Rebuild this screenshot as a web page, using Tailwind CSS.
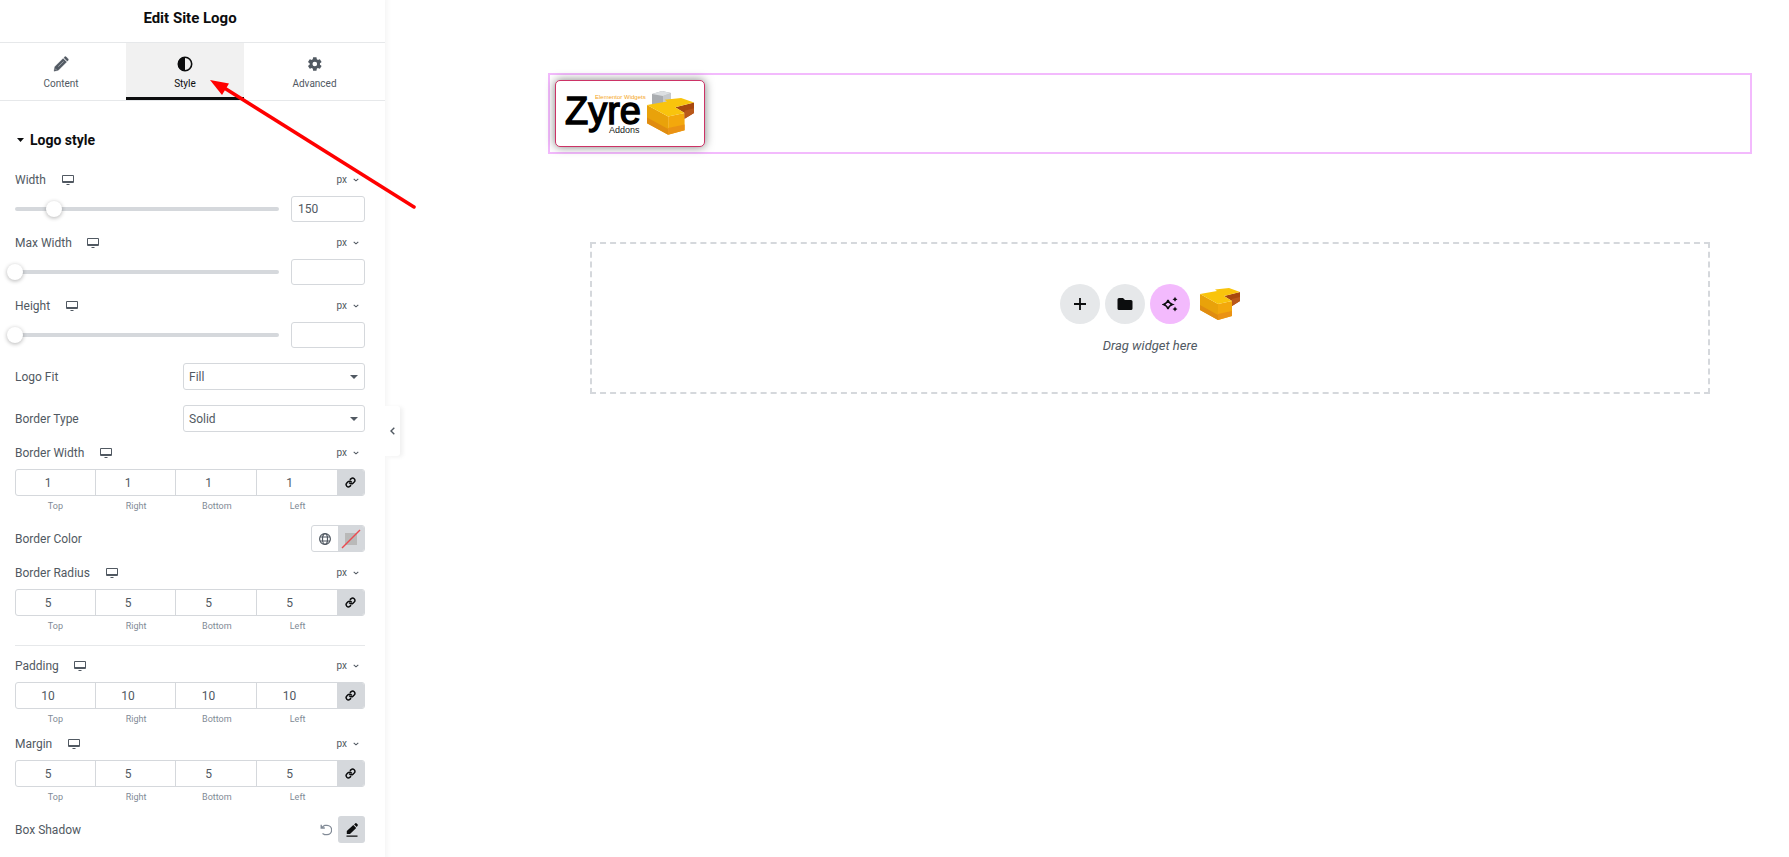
<!DOCTYPE html>
<html lang="en">
<head>
  <meta charset="UTF-8">
  <meta name="viewport" content="width=device-width, initial-scale=1.0">
  <title>Edit Site Logo</title>
  <script src="https://cdn.jsdelivr.net/npm/@tailwindcss/browser@4"></script>
</head>
<body class="relative flex min-h-screen overflow-hidden bg-white font-[Roboto,sans-serif] text-xs text-[#515962]">
  <!-- Icons shared by the controls -->
  <svg class="hidden" aria-hidden="true">
    <symbol id="i-desktop" viewBox="0 0 12 10"><path d="M1 0h10a1 1 0 0 1 1 1v6a1 1 0 0 1-1 1H1a1 1 0 0 1-1-1V1a1 1 0 0 1 1-1zm0 1v5h10V1zM4 9h4l-1 1H5z" fill="currentColor" fill-rule="evenodd"/></symbol>
    <symbol id="i-down" viewBox="0 0 6 4"><path d="M.7.8 3 2.800 5.300.8" fill="none" stroke="currentColor" stroke-width="1.100"/></symbol>
    <symbol id="i-link" viewBox="0 0 24 24"><path d="M10 13a5 5 0 0 0 7.500.5l3-3a5 5 0 0 0-7-7l-1.800 1.700M14 11a5 5 0 0 0-7.500-.5l-3 3a5 5 0 0 0 7 7l1.700-1.700" fill="none" stroke="currentColor" stroke-width="3.200" stroke-linecap="round"/></symbol>
    <symbol id="i-brick" viewBox="0 0 40 33">
      <path d="M0 6 18 16v16L0 22z" fill="#e9a20a"/>
      <path d="M0 17 18 27v5L0 22z" fill="#e08c10"/>
      <path d="M18 16 32 13v15l-14 4z" fill="#f3a80c"/>
      <path d="M18 26 32 23v5l-14 4z" fill="#ea9214"/>
      <path d="M24 8 40 4v9l-8 5v-5z" fill="#a8480f"/>
      <path d="M32 11 40 9v4l-8 5z" fill="#b9581a"/>
      <path d="M0 6 17 3l-2-1.500L29 0l11 4-16 4 8 5-14 3z" fill="#f9c40c"/>
    </symbol>
  </svg>

  <!-- Editor panel -->
  <aside class="relative z-10 w-[385px] shrink-0 shadow-[0_0_4px_3px_#f7f7f7]">
    <h1 class="h-[42px] pt-[6px] pr-[5px] text-center text-[15px] leading-6 font-bold text-[#0c0d0e]">Edit Site Logo</h1>
    <nav class="flex h-[59px] border-y border-[#e6e8ea] text-[10px] leading-3">
      <button class="flex w-[126px] flex-col items-center gap-[6px] pt-[13px] pr-1">
        <svg class="size-4" viewBox="0 0 16 16" fill="currentColor"><path d="m10.900 1.700.9-.9q.7-.5 1.300 0l2.100 2.100q.5.700 0 1.300l-.9 1zM10.100 2.500l3.500 3.500-8.300 8.300L1 15.200l.8-4.400zM10.400 5.200l-5.300 5.200.4.4 5.300-5.200zM2.700 12.400l-.3 1.400 1.400-.3z" fill-rule="evenodd" stroke="currentColor" stroke-width=".3"/></svg>
        Content
      </button>
      <button class="flex w-[118px] flex-col items-center gap-[6px] border-b-3 border-[#0c0d0e] bg-[#f1f1f1] pt-[13px] text-[#0c0d0e]">
        <svg class="size-4" viewBox="0 0 16 16"><circle cx="8" cy="8" r="6.700" fill="none" stroke="currentColor" stroke-width="1.600"/><path d="M8 1a7 7 0 0 0 0 14z" fill="currentColor"/></svg>
        Style
      </button>
      <button class="flex flex-1 flex-col items-center gap-[6px] pt-[13px]">
        <svg class="size-4" viewBox="0 0 24 24" fill="currentColor"><path d="M19.400 13c0-.3.100-.6.100-1s0-.7-.1-1l2.200-1.600c.2-.2.200-.4.100-.6l-2.200-3.700c-.1-.2-.4-.3-.6-.2l-2.500 1c-.5-.4-1.100-.7-1.700-1L14.300 2.200c0-.2-.3-.4-.5-.4H9.600c-.2 0-.4.200-.5.400l-.4 2.700c-.6.3-1.200.6-1.700 1l-2.500-1c-.2-.1-.5 0-.6.200L1.700 8.800c-.1.200-.1.500.1.600L4 11c0 .3-.1.700-.1 1s0 .7.100 1l-2.200 1.600c-.2.200-.2.400-.1.600l2.200 3.700c.1.200.4.300.6.200l2.500-1c.5.400 1.100.7 1.700 1l.4 2.700c0 .2.300.4.500.4h4.200c.2 0 .4-.2.500-.4l.4-2.700c.6-.3 1.200-.6 1.700-1l2.500 1c.2.100.5 0 .6-.2l2.200-3.700c.1-.2.1-.4-.1-.6zM11.700 15.500a3.500 3.500 0 1 1 0-7 3.500 3.500 0 0 1 0 7z" fill-rule="evenodd"/></svg>
        Advanced
      </button>
    </nav>

    <section class="pt-[30px] pr-5 pb-3 pl-[15px]">
      <h2 class="mb-6"><button class="flex h-[17px] items-center gap-[6px] pl-[2px] text-sm font-bold text-[#0c0d0e]">
        <svg class="h-1 w-[7px]" viewBox="0 0 7 4"><path d="M0 0h7L3.500 4z" fill="currentColor"/></svg>Logo style</button></h2>

      <!-- Sliders -->
      <div class="flex flex-col gap-[13px]">
        <div>
          <div class="flex h-4 items-center"><label for="width">Width</label><svg class="ml-4 h-[10px] w-3"><use href="#i-desktop"/></svg><button class="ml-auto flex items-center gap-[6px] pr-[6px] text-[10px]">px<svg class="h-1 w-[6px]"><use href="#i-down"/></svg></button></div>
          <div class="mt-2 flex items-center gap-3">
            <div class="relative flex h-4 flex-1 items-center"><div class="h-1 w-full rounded bg-[#d5d8dc]"></div><input type="range" aria-label="Width" min="0" max="1000" value="148" class="absolute -left-2 h-4 w-[calc(100%+16px)] appearance-none bg-transparent [&::-webkit-slider-thumb]:size-4 [&::-webkit-slider-thumb]:appearance-none [&::-webkit-slider-thumb]:rounded-full [&::-webkit-slider-thumb]:bg-white [&::-webkit-slider-thumb]:shadow-[0_1px_4px_rgba(0,0,0,0.3)]"></div>
            <input id="width" value="150" class="h-[26px] w-[74px] rounded-[3px] border border-[#d5d8dc] px-[6px]">
          </div>
        </div>
        <div>
          <div class="flex h-4 items-center"><label for="max-width">Max Width</label><svg class="ml-[15px] h-[10px] w-3"><use href="#i-desktop"/></svg><button class="ml-auto flex items-center gap-[6px] pr-[6px] text-[10px]">px<svg class="h-1 w-[6px]"><use href="#i-down"/></svg></button></div>
          <div class="mt-2 flex items-center gap-3">
            <div class="relative flex h-4 flex-1 items-center"><div class="h-1 w-full rounded bg-[#d5d8dc]"></div><input type="range" aria-label="Max Width" min="0" max="1000" value="0" class="absolute -left-2 h-4 w-[calc(100%+16px)] appearance-none bg-transparent [&::-webkit-slider-thumb]:size-4 [&::-webkit-slider-thumb]:appearance-none [&::-webkit-slider-thumb]:rounded-full [&::-webkit-slider-thumb]:bg-white [&::-webkit-slider-thumb]:shadow-[0_1px_4px_rgba(0,0,0,0.3)]"></div>
            <input id="max-width" class="h-[26px] w-[74px] rounded-[3px] border border-[#d5d8dc] px-[6px]">
          </div>
        </div>
        <div>
          <div class="flex h-4 items-center"><label for="height">Height</label><svg class="ml-4 h-[10px] w-3"><use href="#i-desktop"/></svg><button class="ml-auto flex items-center gap-[6px] pr-[6px] text-[10px]">px<svg class="h-1 w-[6px]"><use href="#i-down"/></svg></button></div>
          <div class="mt-2 flex items-center gap-3">
            <div class="relative flex h-4 flex-1 items-center"><div class="h-1 w-full rounded bg-[#d5d8dc]"></div><input type="range" aria-label="Height" min="0" max="1000" value="0" class="absolute -left-2 h-4 w-[calc(100%+16px)] appearance-none bg-transparent [&::-webkit-slider-thumb]:size-4 [&::-webkit-slider-thumb]:appearance-none [&::-webkit-slider-thumb]:rounded-full [&::-webkit-slider-thumb]:bg-white [&::-webkit-slider-thumb]:shadow-[0_1px_4px_rgba(0,0,0,0.3)]"></div>
            <input id="height" class="h-[26px] w-[74px] rounded-[3px] border border-[#d5d8dc] px-[6px]">
          </div>
        </div>
      </div>

      <!-- Drop-downs -->
      <div class="my-[15px] flex items-center justify-between">
        <label for="fit">Logo Fit</label>
        <div class="relative w-[182px]"><select id="fit" class="block h-[27px] w-full appearance-none rounded-[3px] border border-[#d5d8dc] px-[5px]"><option>Fill</option></select><svg class="pointer-events-none absolute top-3 right-[7px] h-1 w-2" viewBox="0 0 8 4"><path d="M0 0h8L4 4z" fill="currentColor"/></svg></div>
      </div>
      <div class="mb-[13px] flex items-center justify-between">
        <label for="border-type">Border Type</label>
        <div class="relative w-[182px]"><select id="border-type" class="block h-[27px] w-full appearance-none rounded-[3px] border border-[#d5d8dc] px-[5px]"><option>Solid</option></select><svg class="pointer-events-none absolute top-3 right-[7px] h-1 w-2" viewBox="0 0 8 4"><path d="M0 0h8L4 4z" fill="currentColor"/></svg></div>
      </div>

      <div>
        <div class="flex h-4 items-center"><span>Border Width</span><svg class="ml-4 h-[10px] w-3"><use href="#i-desktop"/></svg><button class="ml-auto flex items-center gap-[6px] pr-[6px] text-[10px]">px<svg class="h-1 w-[6px]"><use href="#i-down"/></svg></button></div>
        <div class="mt-2 flex h-[27px] overflow-hidden rounded-[3px] border border-[#d5d8dc]">
          <input id="bw-t" value="1" class="w-20 border-r border-[#d5d8dc] pr-[15px] text-center"><input id="bw-r" value="1" class="w-20 border-r border-[#d5d8dc] pr-[15px] text-center"><input id="bw-b" value="1" class="w-0 flex-1 border-r border-[#d5d8dc] pr-[15px] text-center"><input id="bw-l" value="1" class="w-0 flex-1 pr-[15px] text-center">
          <button aria-label="Link values" class="flex w-[27px] items-center justify-center bg-[#d5d8dc] text-[#0c0d0e]"><svg class="size-[11px]"><use href="#i-link"/></svg></button>
        </div>
        <div class="mt-1 flex pr-[27px] text-center text-[9px] leading-3 text-[#818a96]"><label for="bw-t" class="flex-1">Top</label><label for="bw-r" class="flex-1">Right</label><label for="bw-b" class="flex-1">Bottom</label><label for="bw-l" class="flex-1">Left</label></div>
      </div>

      <div class="my-[13px] flex items-center justify-between">
        <span>Border Color</span>
        <div class="flex h-[27px] w-[54px] overflow-hidden rounded-[3px] border border-[#d5d8dc]">
          <button aria-label="Global colors" class="flex flex-1 items-center justify-center"><svg class="size-3" viewBox="0 0 12 12" fill="none" stroke="currentColor" stroke-width="1.200"><circle cx="6" cy="6" r="5.400"/><ellipse cx="6" cy="6" rx="2.500" ry="5.400"/><path d="M1 4h10M1 8h10"/></svg></button>
          <button aria-label="Pick color" class="flex w-[26px] items-center justify-center bg-[#d5d8dc]"><svg class="size-5" viewBox="0 0 20 20"><path d="M4 4h12v12H4z" fill="#b9b9b9"/><path d="M1 19 19 1" stroke="#eb4a50" stroke-width="1.500"/></svg></button>
        </div>
      </div>

      <div>
        <div class="flex h-4 items-center"><span>Border Radius</span><svg class="ml-4 h-[10px] w-3"><use href="#i-desktop"/></svg><button class="ml-auto flex items-center gap-[6px] pr-[6px] text-[10px]">px<svg class="h-1 w-[6px]"><use href="#i-down"/></svg></button></div>
        <div class="mt-2 flex h-[27px] overflow-hidden rounded-[3px] border border-[#d5d8dc]">
          <input id="br-t" value="5" class="w-20 border-r border-[#d5d8dc] pr-[15px] text-center"><input id="br-r" value="5" class="w-20 border-r border-[#d5d8dc] pr-[15px] text-center"><input id="br-b" value="5" class="w-0 flex-1 border-r border-[#d5d8dc] pr-[15px] text-center"><input id="br-l" value="5" class="w-0 flex-1 pr-[15px] text-center">
          <button aria-label="Link values" class="flex w-[27px] items-center justify-center bg-[#d5d8dc] text-[#0c0d0e]"><svg class="size-[11px]"><use href="#i-link"/></svg></button>
        </div>
        <div class="mt-1 flex pr-[27px] text-center text-[9px] leading-3 text-[#818a96]"><label for="br-t" class="flex-1">Top</label><label for="br-r" class="flex-1">Right</label><label for="br-b" class="flex-1">Bottom</label><label for="br-l" class="flex-1">Left</label></div>
      </div>

      <hr class="mt-[13px] mb-3 border-[#e6e8ea]">

      <div>
        <div class="flex h-4 items-center"><span>Padding</span><svg class="ml-[15px] h-[10px] w-3"><use href="#i-desktop"/></svg><button class="ml-auto flex items-center gap-[6px] pr-[6px] text-[10px]">px<svg class="h-1 w-[6px]"><use href="#i-down"/></svg></button></div>
        <div class="mt-2 flex h-[27px] overflow-hidden rounded-[3px] border border-[#d5d8dc]">
          <input id="pd-t" value="10" class="w-20 border-r border-[#d5d8dc] pr-[15px] text-center"><input id="pd-r" value="10" class="w-20 border-r border-[#d5d8dc] pr-[15px] text-center"><input id="pd-b" value="10" class="w-0 flex-1 border-r border-[#d5d8dc] pr-[15px] text-center"><input id="pd-l" value="10" class="w-0 flex-1 pr-[15px] text-center">
          <button aria-label="Link values" class="flex w-[27px] items-center justify-center bg-[#d5d8dc] text-[#0c0d0e]"><svg class="size-[11px]"><use href="#i-link"/></svg></button>
        </div>
        <div class="mt-1 flex pr-[27px] text-center text-[9px] leading-3 text-[#818a96]"><label for="pd-t" class="flex-1">Top</label><label for="pd-r" class="flex-1">Right</label><label for="pd-b" class="flex-1">Bottom</label><label for="pd-l" class="flex-1">Left</label></div>
      </div>

      <div class="mt-[11px]">
        <div class="flex h-4 items-center"><span>Margin</span><svg class="ml-4 h-[10px] w-3"><use href="#i-desktop"/></svg><button class="ml-auto flex items-center gap-[6px] pr-[6px] text-[10px]">px<svg class="h-1 w-[6px]"><use href="#i-down"/></svg></button></div>
        <div class="mt-2 flex h-[27px] overflow-hidden rounded-[3px] border border-[#d5d8dc]">
          <input id="mg-t" value="5" class="w-20 border-r border-[#d5d8dc] pr-[15px] text-center"><input id="mg-r" value="5" class="w-20 border-r border-[#d5d8dc] pr-[15px] text-center"><input id="mg-b" value="5" class="w-0 flex-1 border-r border-[#d5d8dc] pr-[15px] text-center"><input id="mg-l" value="5" class="w-0 flex-1 pr-[15px] text-center">
          <button aria-label="Link values" class="flex w-[27px] items-center justify-center bg-[#d5d8dc] text-[#0c0d0e]"><svg class="size-[11px]"><use href="#i-link"/></svg></button>
        </div>
        <div class="mt-1 flex pr-[27px] text-center text-[9px] leading-3 text-[#818a96]"><label for="mg-t" class="flex-1">Top</label><label for="mg-r" class="flex-1">Right</label><label for="mg-b" class="flex-1">Bottom</label><label for="mg-l" class="flex-1">Left</label></div>
      </div>

      <div class="mt-[13px] flex items-center">
        <span>Box Shadow</span>
        <button aria-label="Reset" class="mr-[6px] ml-auto text-[#818a96]"><svg class="size-3" viewBox="0 0 12 12" fill="none" stroke="currentColor" stroke-width="1.300"><path d="M1.200.8v3.200h3.600M1.500 3.700 4 1.700 4.800 1.300H7a4.600 4.600 0 0 1 0 9.300H4.500L2.500 9.500"/></svg></button>
        <button aria-label="Edit" class="flex size-[27px] items-center justify-center rounded-[3px] bg-[#d5d8dc] text-[#0c0d0e]"><svg class="h-[14px] w-3" viewBox="0 0 12 14" fill="currentColor"><path d="M7.300 2 10.200 4.900 4 11H.8V8zM8.100 1.400 9.400.3q.5-.4 1 0l1.300 1.300q.4.500 0 1L10.800 4zM.5 12.500h11v1.200H.5z"/></svg></button>
      </div>
    </section>

    <button aria-label="Hide panel" class="absolute top-[406px] left-full flex h-[50px] w-[15px] items-center justify-center rounded-r-[3px] bg-white shadow-[3px_1px_4px_#f1f1f1]"><svg class="h-2 w-[5px]" viewBox="0 0 5 8"><path d="M4.300.7 1 4l3.300 3.300" fill="none" stroke="currentColor" stroke-width="1.400"/></svg></button>
  </aside>

  <!-- Page preview -->
  <main class="flex-1 pt-[73px] pr-[37px] pl-[163px]">
    <div class="border-2 border-[#f3bafd] p-[5px]">
      <a href="#" aria-label="Zyre Addons" class="block h-[67px] w-[150px] rounded-[5px] border border-[#cc3366] bg-white shadow-[0_0_10px_rgba(0,0,0,0.5)]">
        <svg class="size-full font-['Liberation_Sans',sans-serif]" viewBox="0 0 148 65">
          <text x="9" y="43" font-size="38" fill="#000" stroke="#000" stroke-width="1.400">Zyre</text>
          <text x="39" y="18" font-size="6" fill="#f5a623">Elementor Widgets</text>
          <text x="53" y="52" font-size="9" fill="#222">Addons</text>
          <path d="m96 13 10-3 9 2v14H96z" fill="#a9acb0"/><path d="M107 15 115 12v12h-8z" fill="#c6c9cc"/><path d="m96 13 10-3 9 2-8 3z" fill="#dcdfe2"/>
          <svg x="91" y="17" width="47" height="38" viewBox="0 0 40 33" preserveAspectRatio="none"><use href="#i-brick" width="40" height="33"/></svg>
        </svg>
      </a>
    </div>

    <div class="mx-[42px] mt-[88px] flex h-[152px] flex-col items-center border-2 border-dashed border-[#d5d8dc] pt-10">
      <div class="flex gap-[5px] text-[#0c0d0e]">
        <button aria-label="Add element" class="flex size-10 items-center justify-center rounded-full bg-[#e6e8ea]"><svg class="size-3" viewBox="0 0 12 12"><path d="M6 0v12M0 6h12" stroke="currentColor" stroke-width="1.800"/></svg></button>
        <button aria-label="Add template" class="flex size-10 items-center justify-center rounded-full bg-[#e6e8ea]"><svg class="h-[14px] w-4" viewBox="0 0 16 14"><path d="M2 1h4l2 2h6q1.500 0 1.500 1.500v7q0 1.500-1.500 1.500H2Q.5 13 .5 11.500v-9Q.5 1 2 1z" fill="currentColor"/></svg></button>
        <button aria-label="Build with AI" class="flex size-10 items-center justify-center rounded-full bg-[#f3bafd]"><svg class="size-4" viewBox="0 0 16 16" fill="currentColor"><path d="M6 4q.8 3.300 4.500 4.500Q6.800 9.700 6 13 5.200 9.700 1.500 8.500 5.200 7.300 6 4z" fill="none" stroke="currentColor" stroke-width="1.400"/><path d="M13 .8q.5 2 2.500 2.500-2 .5-2.500 2.500-.5-2-2.500-2.500 2-.5 2.500-2.500zM13 10.500q.5 2 2.500 2.500-2 .5-2.500 2.500-.5-2-2.500-2.500 2-.5 2.500-2.500z"/></svg></button>
        <button aria-label="Zyre templates" class="ml-[5px] flex size-10 items-center justify-center"><svg class="h-[33px] w-10"><use href="#i-brick"/></svg></button>
      </div>
      <p class="mt-3 text-[13px] leading-5 italic">Drag widget here</p>
    </div>
  </main>

  <!-- Pointer to the Style tab -->
  <svg class="pointer-events-none absolute top-[78px] left-[208px] z-20 h-[132px] w-[210px]" viewBox="0 0 210 132"><path d="M14 8.500 206 129" stroke="#f00" stroke-width="3.500" stroke-linecap="round"/><path d="m2 2 19 3.500L14 17z" fill="#f00"/></svg>
</body>
</html>
